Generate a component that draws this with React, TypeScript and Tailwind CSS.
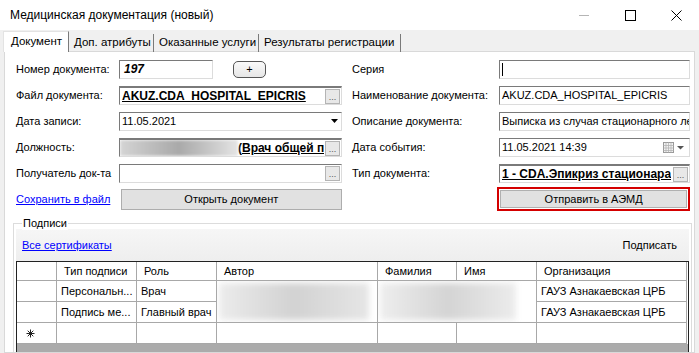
const field =
  "relative h-[19px] bg-white border border-t-[#7a7a7a] border-l-[#7a7a7a] border-r-[#dcdcdc] border-b-[#dcdcdc] flex items-center overflow-hidden";

function Dots() {
  return (
    <span className="absolute right-[1px] top-[1px] w-[15px] h-[15px] bg-[#e8e8e8] border border-[#b4b4b4] flex items-end justify-center text-[9px] leading-[9px] text-[#555] pb-[1px]">
      ...
    </span>
  );
}

function Label({ children, w }: { children: React.ReactNode; w: string }) {
  return <div className={`${w} shrink-0 text-[11px] text-black whitespace-nowrap`}>{children}</div>;
}

function Tab({ label, active, w }: { label: string; active?: boolean; w: string }) {
  return (
    <div
      className={`${w} shrink-0 flex items-center whitespace-nowrap text-[11.5px] text-black border-r border-[#7a7a7a] ${
        active ? "h-[21px] bg-white pl-[7px] border-l border-t border-l-[#e3e3e3] border-t-[#e3e3e3]" : "h-[18px] pl-[5px]"
      }`}
    >
      {label}
    </div>
  );
}

function NewRowMark() {
  return (
    <svg width="9" height="9" viewBox="0 0 9 9">
      <path d="M4.5 0.5V8.5M0.5 4.5H8.5M1.7 1.7L7.3 7.3M7.3 1.7L1.7 7.3" stroke="#222" strokeWidth="1" />
    </svg>
  );
}

export default function App() {
  const cols = "grid-cols-[40px_80px_80px_161px_79px_80px_150px]";
  const cell = "border-r border-b border-[#a8a8a8] flex items-center text-[11px] px-[4px] whitespace-nowrap overflow-hidden";
  const head = "border-r border-b border-[#a8a8a8] flex items-center text-[11px] px-[7px] bg-white whitespace-nowrap";
  return (
    <div className="w-[699px] h-[353px] bg-white overflow-hidden flex flex-col font-['Liberation_Sans',Arial,sans-serif] text-black">
      {/* title bar */}
      <div className="h-[30px] shrink-0 flex items-center pl-[10px]">
        <span className="text-[12px]">Медицинская документация (новый)</span>
        <div className="ml-auto flex h-full">
          <div className="w-[46px] flex items-center justify-center">
            <span className="w-[10px] h-px bg-[#b5b5b5]" />
          </div>
          <div className="w-[46px] flex items-center justify-center">
            <span className="w-[11px] h-[11px] border border-black" />
          </div>
          <div className="w-[46px] flex items-center justify-center">
            <svg width="11" height="11" viewBox="0 0 11 11">
              <path d="M0.5 0.5L10.5 10.5M10.5 0.5L0.5 10.5" stroke="#000" strokeWidth="1" />
            </svg>
          </div>
        </div>
      </div>

      <div className="flex-1 bg-[#f0f0f0] flex flex-col pl-[4px] pr-[4px]">
        {/* tabs */}
        <div className="h-[22px] shrink-0 flex items-end -ml-[1px] relative z-10 -mb-px">
          <Tab label="Документ" active w="w-[66px]" />
          <Tab label="Доп. атрибуты" w="w-[85px]" />
          <Tab label="Оказанные услуги" w="w-[105px]" />
          <Tab label="Результаты регистрации" w="w-[142px]" />
        </div>

        {/* panel */}
        <div className="flex-1 bg-white border border-[#d9d9d9] pl-[11px] pr-[4px] pt-[4px] flex flex-col">
          {/* row 1 */}
          <div className="h-[26px] flex items-center">
            <Label w="w-[103px]">Номер документа:</Label>
            <div className="w-[223px] flex items-center">
              <div className={`${field} w-[94px] pl-[4px]`}>
                <span className="text-[12px] font-bold italic">197</span>
              </div>
              <div className="ml-[20px] w-[33px] h-[17px] rounded-[5px] border border-[#555] bg-gradient-to-b from-[#fafafa] to-[#e6e6e6] flex items-center justify-center text-[11px] leading-none">
                +
              </div>
            </div>
            <div className="w-[10px]" />
            <Label w="w-[147px]">Серия</Label>
            <div className={`${field} w-[191px] pl-[2px]`}>
              <span className="w-px h-[13px] bg-black" />
            </div>
          </div>

          {/* row 2 */}
          <div className="h-[26px] flex items-center">
            <Label w="w-[103px]">Файл документа:</Label>
            <div className={`${field} w-[223px] pl-[2px] border-t-2`}>
              <span className="text-[12px] font-bold underline">AKUZ.CDA_HOSPITAL_EPICRIS</span>
              <Dots />
            </div>
            <div className="w-[10px]" />
            <Label w="w-[147px]">Наименование документа:</Label>
            <div className={`${field} w-[191px] pl-[2px]`}>
              <span className="text-[11px]">AKUZ.CDA_HOSPITAL_EPICRIS</span>
            </div>
          </div>

          {/* row 3 */}
          <div className="h-[26px] flex items-center">
            <Label w="w-[103px]">Дата записи:</Label>
            <div className={`${field} w-[223px] pl-[2px]`}>
              <span className="text-[11px]">11.05.2021</span>
              <svg className="absolute right-[3px] top-[6px]" width="7" height="5" viewBox="0 0 7 5">
                <path d="M0 0H7L3.5 4Z" fill="#000" />
              </svg>
            </div>
            <div className="w-[10px]" />
            <Label w="w-[147px]">Описание документа:</Label>
            <div className={`${field} w-[191px] pl-[2px]`}>
              <span className="text-[11px] whitespace-nowrap overflow-hidden">Выписка из случая стационарного ле</span>
            </div>
          </div>

          {/* row 4 */}
          <div className="h-[26px] flex items-center">
            <Label w="w-[103px]">Должность:</Label>
            <div className={`${field} w-[223px] border-t-2 pr-[17px]`}>
              <div className="w-[118px] h-full shrink-0 bg-gradient-to-r from-[#d4d4d4] via-[#a9a9a9] to-[#e4e4e4] blur-[1.5px]" />
              <span className="text-[12px] font-bold underline whitespace-nowrap overflow-hidden">(Врач общей пр</span>
              <Dots />
            </div>
            <div className="w-[10px]" />
            <Label w="w-[147px]">Дата события:</Label>
            <div className={`${field} w-[191px] pl-[2px]`}>
              <span className="text-[11px]">11.05.2021 14:39</span>
              <svg className="absolute right-[4px] top-[3px]" width="22" height="11" viewBox="0 0 22 11">
                <rect x="0.5" y="0.5" width="10" height="10" fill="#f2f2f2" stroke="#9a9a9a" />
                <path d="M0.5 3.5H10.5M0.5 6H10.5M0.5 8.5H10.5M3 0.5V10.5M5.5 0.5V10.5M8 0.5V10.5" stroke="#b4b4b4" strokeWidth="0.8" />
                <path d="M14 4H21L17.5 7.5Z" fill="#555" />
              </svg>
            </div>
          </div>

          {/* row 5 */}
          <div className="h-[26px] flex items-center">
            <Label w="w-[103px]">Получатель док-та</Label>
            <div className={`${field} w-[223px]`}>
              <Dots />
            </div>
            <div className="w-[10px]" />
            <Label w="w-[147px]">Тип документа:</Label>
            <div className={`${field} w-[191px] pl-[2px] pr-[17px] border-t-2`}>
              <span className="text-[12px] font-bold underline whitespace-nowrap overflow-hidden">1 - CDA.Эпикриз стационара</span>
              <Dots />
            </div>
          </div>

          {/* row 6 */}
          <div className="h-[26px] flex items-center">
            <div className="w-[105px] shrink-0 text-[11px] text-[#0000ff] underline">Сохранить в файл</div>
            <div className="w-[221px] h-[21px] bg-[#e1e1e1] border border-[#adadad] flex items-center justify-center text-[11px]">
              Открыть документ
            </div>
            <div className="w-[156px]" />
            <div className="w-[193px] h-[24px] border-2 border-[#d40000] p-px">
              <div className="w-full h-full bg-[#e1e1e1] border border-[#b0b0b0] flex items-center justify-center text-[11px]">
                Отправить в АЭМД
              </div>
            </div>
          </div>

          {/* group box */}
          <div className="relative mt-[11px] -ml-[3px] w-[679px] flex-1 border border-[#dcdcdc] border-b-0 px-[2px] pt-[5px] flex flex-col">
            <span className="absolute -top-[8px] left-[8px] bg-white px-[1px] text-[11px] leading-[14px]">Подписи</span>
            <div className="h-[32px] shrink-0 bg-gradient-to-b from-[#f6f6f6] to-[#eeeeee] flex items-center pl-[6px] pr-[12px]">
              <span className="text-[11px] text-[#0000ff] underline">Все сертификаты</span>
              <span className="ml-auto text-[11px]">Подписать</span>
            </div>
            <div className="flex-1 bg-[#ababab] border-l border-t border-r border-[#222] flex flex-col">
              <div className={`grid ${cols} grid-rows-[19px_21px_21px_21px] bg-white`}>
                <div className={head} />
                <div className={head}>Тип подписи</div>
                <div className={head}>Роль</div>
                <div className={head}>Автор</div>
                <div className={head}>Фамилия</div>
                <div className={head}>Имя</div>
                <div className={`${head} px-[4px]`}>Организация</div>

                <div className={cell} />
                <div className={cell}>Персональн...</div>
                <div className={cell}>Врач</div>
                <div className="row-span-2 border-r border-b border-[#a8a8a8] bg-white overflow-hidden p-[2px] pr-[8px]">
                  <div className="w-full h-full bg-gradient-to-r from-[#ececec] via-[#d2d2d2] to-[#e6e6e6] blur-[3px]" />
                </div>
                <div className="col-span-2 row-span-2 border-r border-b border-[#a8a8a8] bg-white overflow-hidden p-[2px] pr-[20px]">
                  <div className="w-full h-full bg-gradient-to-r from-[#eeeeee] via-[#d4d4d4] to-[#ececec] blur-[3px]" />
                </div>
                <div className={cell}>ГАУЗ Азнакаевская ЦРБ</div>

                <div className={cell} />
                <div className={cell}>Подпись ме...</div>
                <div className={cell}>Главный врач</div>
                <div className={cell}>ГАУЗ Азнакаевская ЦРБ</div>

                <div className={`${cell} pl-[9px]`}>
                  <NewRowMark />
                </div>
                <div className={cell} />
                <div className={cell} />
                <div className={cell} />
                <div className={cell} />
                <div className={cell} />
                <div className={cell} />
              </div>
            </div>
          </div>
        </div>
      </div>
    </div>
  );
}
